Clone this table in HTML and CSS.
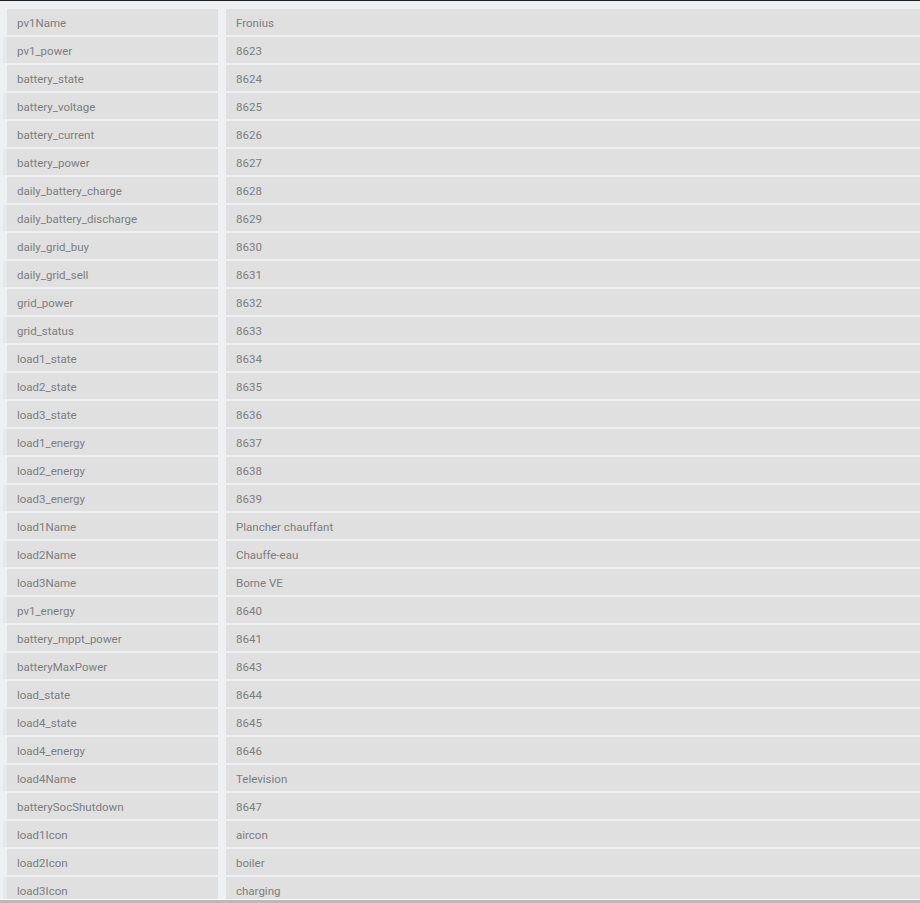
FILE: index.html
```html
<!DOCTYPE html>
<html>
<head>
<meta charset="utf-8">
<link rel="stylesheet" href="styles.css">
</head>
<body>
<div class="topline"></div>
<div class="list">
  <div class="row"><div class="cell key">pv1Name</div><div class="cell val">Fronius</div></div>
  <div class="row"><div class="cell key">pv1_power</div><div class="cell val">8623</div></div>
  <div class="row"><div class="cell key">battery_state</div><div class="cell val">8624</div></div>
  <div class="row"><div class="cell key">battery_voltage</div><div class="cell val">8625</div></div>
  <div class="row"><div class="cell key">battery_current</div><div class="cell val">8626</div></div>
  <div class="row"><div class="cell key">battery_power</div><div class="cell val">8627</div></div>
  <div class="row"><div class="cell key">daily_battery_charge</div><div class="cell val">8628</div></div>
  <div class="row"><div class="cell key">daily_battery_discharge</div><div class="cell val">8629</div></div>
  <div class="row"><div class="cell key">daily_grid_buy</div><div class="cell val">8630</div></div>
  <div class="row"><div class="cell key">daily_grid_sell</div><div class="cell val">8631</div></div>
  <div class="row"><div class="cell key">grid_power</div><div class="cell val">8632</div></div>
  <div class="row"><div class="cell key">grid_status</div><div class="cell val">8633</div></div>
  <div class="row"><div class="cell key">load1_state</div><div class="cell val">8634</div></div>
  <div class="row"><div class="cell key">load2_state</div><div class="cell val">8635</div></div>
  <div class="row"><div class="cell key">load3_state</div><div class="cell val">8636</div></div>
  <div class="row"><div class="cell key">load1_energy</div><div class="cell val">8637</div></div>
  <div class="row"><div class="cell key">load2_energy</div><div class="cell val">8638</div></div>
  <div class="row"><div class="cell key">load3_energy</div><div class="cell val">8639</div></div>
  <div class="row"><div class="cell key">load1Name</div><div class="cell val">Plancher chauffant</div></div>
  <div class="row"><div class="cell key">load2Name</div><div class="cell val">Chauffe-eau</div></div>
  <div class="row"><div class="cell key">load3Name</div><div class="cell val">Borne VE</div></div>
  <div class="row"><div class="cell key">pv1_energy</div><div class="cell val">8640</div></div>
  <div class="row"><div class="cell key">battery_mppt_power</div><div class="cell val">8641</div></div>
  <div class="row"><div class="cell key">batteryMaxPower</div><div class="cell val">8643</div></div>
  <div class="row"><div class="cell key">load_state</div><div class="cell val">8644</div></div>
  <div class="row"><div class="cell key">load4_state</div><div class="cell val">8645</div></div>
  <div class="row"><div class="cell key">load4_energy</div><div class="cell val">8646</div></div>
  <div class="row"><div class="cell key">load4Name</div><div class="cell val">Television</div></div>
  <div class="row"><div class="cell key">batterySocShutdown</div><div class="cell val">8647</div></div>
  <div class="row"><div class="cell key">load1Icon</div><div class="cell val">aircon</div></div>
  <div class="row"><div class="cell key">load2Icon</div><div class="cell val">boiler</div></div>
  <div class="row"><div class="cell key">load3Icon</div><div class="cell val">charging</div></div>
</div>
<div class="footline"></div>
<div class="edge"></div>
</body>
</html>
```

FILE: styles.css
```css
html, body {
  margin: 0;
  padding: 0;
}
body {
  width: 920px;
  height: 903px;
  overflow: hidden;
  background: #eff0f1;
  font-family: Roboto, "Liberation Sans", sans-serif;
  font-size: 11.5px;
  color: #7d7e7e;
  display: flex;
  flex-direction: column;
}
.topline {
  flex: 0 0 1px;
  background: #1d1e20;
}
.list {
  flex: 0 0 890px;
  height: 890px;
  overflow: hidden;
  padding-top: 8px;
  display: flex;
  flex-direction: column;
  gap: 2px;
}
.row {
  flex: 0 0 26px;
  display: grid;
  grid-template-columns: 211px 1fr;
  column-gap: 8px;
  padding-left: 7px;
}
.row:nth-child(even) {
  background: linear-gradient(to right, transparent 3px, #e7e8e9 3px, #e7e8e9 7px, transparent 7px);
}
.cell {
  background: #dfe0df;
  display: flex;
  align-items: center;
  padding-left: 10px;
  padding-top: 1px;
  white-space: nowrap;
}
.footline {
  flex: 0 0 1px;
  background: #f8f9f9;
}
.edge {
  flex: 0 0 3px;
  background: #b5babe;
}
```
